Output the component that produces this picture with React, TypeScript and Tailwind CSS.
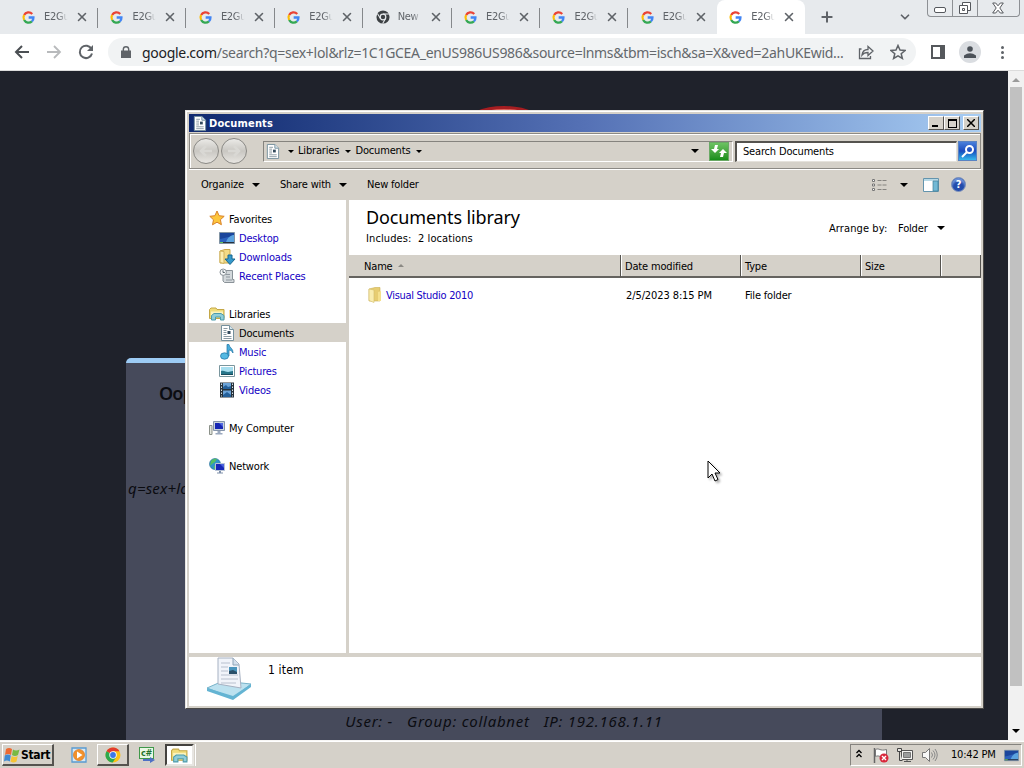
import React from 'react';
import { ChevronDown, Plus, X } from 'lucide-react';

const tabs = ['E2Gu', 'E2Gu', 'E2Gu', 'E2Gu', 'New', 'E2Gu', 'E2Gu', 'E2Gu', 'E2Gu'];

const navGroups = [
  { name: 'Favorites', icon: 'star', items: [
    { name: 'Desktop', icon: 'desktop' },
    { name: 'Downloads', icon: 'downloads' },
    { name: 'Recent Places', icon: 'recent' },
  ] },
  { name: 'Libraries', icon: 'libraries', items: [
    { name: 'Documents', icon: 'document' },
    { name: 'Music', icon: 'music' },
    { name: 'Pictures', icon: 'pictures' },
    { name: 'Videos', icon: 'videos' },
  ] },
  { name: 'My Computer', icon: 'computer', items: [] },
  { name: 'Network', icon: 'network', items: [] },
];

const shapes: Record<string, React.ReactNode> = {
  star: <path d="M8 0l2.100 4.700 5.100.6-3.800 3.400 1 5L8 11.200l-4.500 2.600 1-5L.8 5.300l5.100-.6z" fill="#fdc63c" stroke="#d9822b" />,
  desktop: (
    <>
      <path d="M.5 2.500h15v11H.5z" fill="#2c62bd" stroke="#8193a3" />
      <path d="M1 3h14v4C9 6 5 9 1 9z" fill="#1b469c" />
      <path d="M7 12c2-5 5-7 8-7v7z" fill="#5aa2df" />
      <path d="M1 12.500h14" stroke="#28323f" />
      <path d="M1 12.500h3" stroke="#68c45d" />
    </>
  ),
  downloads: (
    <>
      <path d="M1 2l5-1.500h5V14H1z" fill="#f3db85" stroke="#c9a84a" />
      <path d="M5 2.500v12l-4-1V2z" fill="#fbeeb1" stroke="#d0b25c" />
      <path d="M9 6h4v4h3l-5 5.500L6 10h3z" fill="#3599cc" stroke="#19678f" />
    </>
  ),
  recent: (
    <>
      <path d="M5 2.500h8.500v9H15v3H5.500L4 13V6z" fill="#d3d8db" stroke="#8a9298" />
      <path d="M7 6.500h4M7 9h4M7 12h6" stroke="#8f989f" />
      <circle cx="4.200" cy="4.200" r="3.200" fill="#f6f8f9" stroke="#8a9298" />
      <path d="M4 2.300v2.200h1.800" stroke="#59646c" fill="none" />
    </>
  ),
  libraries: (
    <>
      <path d="M.5 3.500L2 2h5l1 1.500h7v9H.5z" fill="#f0dc7a" stroke="#c4a746" />
      <path d="M2 5.500h12v4H2z" fill="#fbf3bd" />
      <path d="M2.500 14V9.500L5 7.500h7l3 2V14h-3.500v-3h-5v3z" fill="#8fcdd8" stroke="#4d9bab" />
    </>
  ),
  document: (
    <>
      <path d="M2.500.500h8l4 4v11h-12z" fill="#fff" stroke="#75909d" />
      <path d="M10.500.500v4h4" fill="#d7e6ed" stroke="#75909d" />
      <path d="M4.500 3.500h4M4.500 5.500h3M4.500 7.500h3M4.500 9.500h3M4.500 11.500h8M4.500 13.500h8" stroke="#8b9aa3" />
      <path d="M8.500 6h3v3h-3z" fill="#334a5c" />
    </>
  ),
  music: (
    <>
      <path d="M8 .5h2c0 3 4.500 4 4 8.500-1-2-2.500-3-4-3V12H8z" fill="#49addb" stroke="#1e73a4" strokeWidth=".7" />
      <ellipse cx="5.500" cy="12" rx="4" ry="3.200" fill="#55b9e2" stroke="#1e73a4" strokeWidth=".7" />
    </>
  ),
  pictures: (
    <>
      <path d="M.5 2.500h15v11H.5z" fill="#fff" stroke="#7a969e" />
      <path d="M2 4h12v8H2z" fill="#a7deef" />
      <path d="M2 8c3-1 5 1 7 1s3-1 5-1v4H2z" fill="#27758a" />
      <path d="M2 11h12v1H2z" fill="#174b5c" />
    </>
  ),
  videos: (
    <>
      <path d="M1 .5h14v15H1z" fill="#26313a" />
      <path d="M4 1h8v6H4zM4 8.500h8V15H4z" fill="#6ba3d8" />
      <path d="M4 5l3-2 2 2 3-1v3H4zM4 13l4-3 4 3v2H4z" fill="#24609a" />
      <path d="M2.500 1.500v13M13.500 1.500v13" stroke="#d5e0e7" strokeDasharray="1.500 1.500" />
    </>
  ),
  computer: (
    <>
      <path d="M.5 5.500h2.500v9H.5z" fill="#e3e6dd" stroke="#8b9189" />
      <path d="M4.500 1.500h11v9h-11z" fill="#cad3dd" stroke="#8695ab" />
      <path d="M6 3h8v6H6z" fill="#1727b4" />
      <path d="M10 3h4v4z" fill="#5369e0" />
      <path d="M8.500 11h3v2h2v1.500h-7V13h2z" fill="#9aa8be" />
    </>
  ),
  network: (
    <>
      <circle cx="6" cy="6" r="5.500" fill="#3094c8" stroke="#226b93" strokeWidth=".6" />
      <path d="M2 3c3-3 5-2 6-2L6 4 3 6 1 8zM5 8l3-1v4H5z" fill="#54bf62" />
      <path d="M6.500 5.500h9v7h-9z" fill="#1828b8" stroke="#b7c3d5" />
      <path d="M11 6h4v4z" fill="#4b62dd" />
      <path d="M10 13h2v1.500h2v1H8v-1h2z" fill="#7f90aa" />
    </>
  ),
  folder: (
    <>
      <path d="M2 2l6-1.500h5V14H2z" fill="#e7cd72" stroke="#cbb052" strokeWidth=".6" />
      <path d="M2 2l5 1v12.500l-5-2z" fill="#f9edb0" stroke="#d3bd6a" strokeWidth=".6" />
      <path d="M11 5l3-1v10h-3z" fill="#f5e08c" />
    </>
  ),
  google: (
    <g fill="none" strokeWidth="2.800">
      <path d="M12.600 3.600A6.200 6.200 0 0 0 2.600 5" stroke="#ea4335" />
      <path d="M2.600 5a6.200 6.200 0 0 0 0 6" stroke="#fbbc05" />
      <path d="M2.600 11a6.200 6.200 0 0 0 9.600 1.700" stroke="#34a853" />
      <path d="M12.200 12.700A6 6 0 0 0 14.100 8H8.200" stroke="#4285f4" />
    </g>
  ),
  chrome: (
    <>
      <circle cx="8" cy="8" r="7.500" fill="#fbc116" />
      <path d="M8 8L1.500 4.200A7.500 7.500 0 0 1 14.500 4.200H8z" fill="#e33b2e" />
      <path d="M8 8L1.500 4.200A7.500 7.500 0 0 0 7.700 15.500L11.300 9.900z" fill="#2da94f" />
      <circle cx="8" cy="8" r="3.700" fill="#fff" />
      <circle cx="8" cy="8" r="2.900" fill="#3b78e7" />
    </>
  ),
  chromeGray: (
    <>
      <circle cx="8" cy="8" r="7.500" fill="#3c4043" />
      <circle cx="8" cy="8" r="3.200" fill="#3c4043" stroke="#e7eaed" strokeWidth="1.400" />
      <path d="M8 4.500h6.800M5 9.700L1.600 4M11 9.700L7.600 15.500" stroke="#e7eaed" strokeWidth="1.200" />
    </>
  ),
  flag: (
    <>
      <path d="M1.500 1v15" stroke="#666" strokeWidth="1.500" />
      <path d="M2.500 2.500c4-2 4 2 11 0v7c-6 2-7-2-11 0z" fill="#fff" stroke="#777" />
      <circle cx="11" cy="11" r="4.500" fill="#d9283c" />
      <path d="M9 9l4 4m0-4l-4 4" stroke="#fff" strokeWidth="1.400" />
    </>
  ),
  lan: (
    <>
      <path d="M4.500 3.500h11v9h-11z" fill="#f5f5f3" stroke="#555" />
      <path d="M6.500 5.500h7v5h-7z" fill="#9b9d9d" stroke="#777" />
      <path d="M7 14.500h7M10 12.500v2" stroke="#555" />
      <path d="M.5 1.500h4v3h-4zM2.500 4.500v9h3" fill="#e5e4e0" stroke="#444" />
    </>
  ),
  speaker: (
    <>
      <path d="M1.500 5.500h3l4-4v13l-4-4h-3z" fill="#f8f8f8" stroke="#777" />
      <path d="M10.500 5.500q2 2.500 0 5M12 3.500q4 4.500 0 9M14 2q4.500 6 0 12" stroke="#888" fill="none" />
    </>
  ),
  windows: (
    <>
      <path d="M2 2q3-2 6 0L7 8Q4 6 1 8z" fill="#ed6a32" />
      <path d="M9 2.500q3 2 6.500 0L14 8q-3 2-6 0z" fill="#79b943" />
      <path d="M.8 8.500q3-2 6 0l-1 6q-3-2-5.800 0z" fill="#3f8ad2" />
      <path d="M7.700 9q3 2 6 0l-1.200 5.500q-3 2-6 0z" fill="#f6c434" />
    </>
  ),
  player: (
    <>
      <path d="M1 1h14v14H1z" fill="#d5e9f7" stroke="#5a9ad0" strokeWidth="1.300" />
      <circle cx="8" cy="8" r="5.600" fill="#f1912b" stroke="#d8701a" strokeWidth=".6" />
      <path d="M6 4.500L11.500 8 6 11.500z" fill="#fff" />
    </>
  ),
};

const Icon = ({ name, className = 'w-4 h-4' }: { name: string; className?: string }) => (
  <svg viewBox="0 0 16 16" className={`shrink-0 overflow-visible ${className}`} fill="none">{shapes[name]}</svg>
);

const Caret = ({ className = 'w-[7px] h-1' }: { className?: string }) => (
  <svg viewBox="0 0 8 4" className={`shrink-0 ${className}`}><path d="M0 0h8L4 4z" fill="#000" /></svg>
);

const raised = 'bg-[#d5d1c9] border border-t-white border-l-white border-r-[#55534f] border-b-[#55534f]';

function TabStrip() {
  return (
    <div className="flex h-[34px] bg-[#e7eaed] pl-[9.600px] text-[#5f6368]">
      {tabs.map((tab, i) => (
        <div key={i} className={`relative flex items-center w-[88.400px] shrink-0 pl-[12.500px] ${i === 8 ? 'bg-white rounded-t-lg' : ''}`}>
          <Icon name={tab === 'New' ? 'chromeGray' : 'google'} className={tab === 'New' ? 'w-[14px] h-[14px]' : 'w-[13px] h-[13px]'} />
          <span className={`${tab === 'New' ? 'ml-[2px]' : 'ml-[3px]'} block pt-px pl-[6px] w-[31px] whitespace-nowrap text-[11px] tracking-[-0.300px] [mask-image:linear-gradient(to_right,black_65%,transparent_96%)]`}>{tab}</span>
          <X className="w-3.5 h-3.5 ml-[6px] shrink-0" strokeWidth={2.700} />
          {i < 7 && <span className="absolute right-0 top-2 w-px h-5 bg-[#85888b]" />}
        </div>
      ))}
      <Plus className="w-4 h-4 mt-[9px] ml-[13.400px]" strokeWidth={3} />
      <ChevronDown className="w-3.5 h-3.5 mt-[10px] ml-[63px]" strokeWidth={3} />
      <div className="flex ml-[15px] w-[93px] h-[17px] border border-t-0 border-[#8d9094] rounded-b-[4px]">
        <div className="w-[25px] border-r border-[#8d9094] flex justify-center pt-[7px]">
          <div className="w-3 h-[6px] rounded-xs border border-[#55585d] bg-white" />
        </div>
        <div className="w-[25px] border-r border-[#8d9094] flex justify-center pt-[1px]">
          <svg viewBox="0 0 14 14" className="w-[14px] h-[14px]" fill="#fff" stroke="#55585d"><path d="M4.500 1.500h8v8h-8z" /><path d="M1.500 4.500h8v8h-8z" /><path d="M4.500 7.500h2v2h-2z" /></svg>
        </div>
        <div className="flex-1 flex justify-center pt-[2px]">
          <svg viewBox="0 0 12 12" className="w-3 h-3" fill="#fff" stroke="#55585d"><path d="M.7 1h3L6 3.800 8.300 1h3L7.800 6l3.500 5h-3L6 8.200 3.700 11h-3L4.200 6z" /></svg>
        </div>
      </div>
    </div>
  );
}

function AddressBar() {
  return (
    <div className="flex items-center h-[37px] bg-white border-b border-[#dcdcdc] text-[#5f6368] pl-[14px]">
      <svg viewBox="0 0 16 16" className="w-4 h-4" fill="none" stroke="#4b4f53" strokeWidth="2"><path d="M15 8H2m6-6L2 8l6 6" /></svg>
      <svg viewBox="0 0 16 16" className="w-4 h-4 ml-4" fill="none" stroke="#b8babc" strokeWidth="1.800"><path d="M1 8h13M8 2l6 6-6 6" /></svg>
      <svg viewBox="0 0 16 16" className="w-4 h-4 ml-4" fill="none" stroke="#5f6368" strokeWidth="2"><path d="M13.500 5A6.200 6.200 0 1 0 14 9.500" /><path d="M15 1v6H9z" fill="#5f6368" stroke="none" /></svg>
      <div className="flex items-center ml-[14px] w-[808px] h-7 rounded-full bg-[#f1f3f4] pl-[13px]">
        <svg viewBox="0 0 10 13" className="w-[10px] h-[13px]"><path d="M0 4.500h10V12H0z" fill="#5f6368" /><path d="M2.300 5V3.500a2.700 2.700 0 0 1 5.400 0V5" fill="none" stroke="#5f6368" strokeWidth="1.400" /></svg>
        <span className="ml-[11px] w-[704px] whitespace-nowrap text-[14px] tracking-[-0.295px] font-['Noto_Sans',sans-serif] text-[#64686c]"><span className="text-[#202124]">google.com</span>/search?q=sex+lol&amp;rlz=1C1GCEA_enUS986US986&amp;source=lnms&amp;tbm=isch&amp;sa=X&amp;ved=2ahUKEwid...</span>
        <svg viewBox="0 0 16 16" className="w-4 h-4 ml-[12px]" fill="none" stroke="#5f6368" strokeWidth="1.300"><path d="M3.500 5H1.500v9.500h11V12" /><path d="M4 11c.5-4 3-5.500 6-5.500V2.500L15 7l-5 4.500v-3c-2.500 0-4.500.5-6 2.500z" /></svg>
        <svg viewBox="0 0 16 16" className="w-4 h-4 ml-4" fill="none" stroke="#5f6368" strokeWidth="1.500"><path d="M8 1.500l2 4.600 5 .4-3.800 3.200 1.200 4.800L8 11.900l-4.400 2.600 1.200-4.800L1 6.500l5-.4z" /></svg>
      </div>
      <svg viewBox="0 0 14 14" className="w-[14px] h-[14px] ml-[15px]"><path d="M1 1h12v12H1z" fill="none" stroke="#55585c" strokeWidth="2" /><path d="M9 1h4v12H9z" fill="#55585c" /></svg>
      <div className="flex justify-center items-center w-[22px] h-[22px] rounded-full bg-[#dadde1] ml-[14px]">
        <svg viewBox="0 0 12 12" className="w-3 h-3" fill="#4c5259"><circle cx="6" cy="3" r="2.800" /><path d="M0 12V9.500Q6 5 12 9.500V12z" /></svg>
      </div>
      <div className="flex flex-col gap-[2px] ml-5">
        {[0, 1, 2].map((i) => <span key={i} className="w-[3px] h-[3px] rounded-full bg-[#5f6368]" />)}
      </div>
    </div>
  );
}

function BlockedPage() {
  return (
    <div className="flex h-[669px] bg-[#1f222b]">
      <div className="flex-1 overflow-hidden pt-[35px]">
        <div className="mx-auto w-[150px] h-[150px] rounded-full border-[3px] border-[#a51d21] bg-[#e06a60]" />
        <div className="mx-auto mt-[102px] w-[756px] h-[382px] rounded-t-[5px] border-t-[5px] border-[#9dccf5] bg-[#464a5b] font-['Noto_Sans',sans-serif] text-[#0b0c11]">
          <h1 className="pl-[33px] pt-[17px] text-[18px] leading-[26px] font-semibold tracking-[-0.800px]">Oops!</h1>
          <p className="pl-[2px] pt-[70px] text-[15px] leading-[24px] italic tracking-[0.200px]">q=sex+lol</p>
          <p className="pt-[209px] text-center text-[15px] leading-[24px] italic tracking-[0.750px] whitespace-pre">User: -   Group: collabnet   IP: 192.168.1.11</p>
        </div>
      </div>
      <div className="flex flex-col items-center justify-between w-4 bg-[#f1f1f1] py-[7px]">
        <svg viewBox="0 0 8 4" className="w-2 h-1"><path d="M0 4h8L4 0z" fill="#9b9b9b" /></svg>
        <div className="w-3 h-[599px] bg-[#c1c1c1] mb-auto mt-[5px]" />
        <Caret className="w-2 h-1" />
      </div>
    </div>
  );
}

function TitleBar() {
  return (
    <div className="flex items-center h-[18px] bg-linear-to-r from-[#10296f] via-[#5571b5] to-[#a8cdf3] pl-[3px] pr-[2px] text-white">
      <Icon name="document" className="w-[15px] h-[15px]" />
      <span className="ml-[2px] pt-px text-[11px] font-bold leading-[18px] tracking-[0.160px]">Documents</span>
      <div className="flex ml-auto">
        <div className={`${raised} w-4 h-[14px] flex items-end pl-[3px] pb-[2px]`}><span className="w-[6px] h-[2px] bg-black" /></div>
        <div className={`${raised} w-4 h-[14px] flex items-center justify-center`}><span className="w-[9px] h-[9px] border border-t-2 border-black" /></div>
        <div className={`${raised} w-4 h-[14px] flex items-center justify-center ml-[3px]`}><svg viewBox="0 0 8 8" className="w-2 h-2" stroke="#000" strokeWidth="1.500"><path d="M0 0l8 8M8 0L0 8" /></svg></div>
      </div>
    </div>
  );
}

function NavButton({ flip }: { flip?: boolean }) {
  return (
    <div className="flex items-center justify-center w-[26px] h-[26px] rounded-full border-[1.500px] border-[#8a8985] bg-linear-to-b from-[#ebeae7] via-[#c9c7c2] to-[#e8e6e2]">
      <svg viewBox="0 0 16 16" className={`w-4 h-4 ${flip ? 'rotate-180' : ''}`} fill="none" stroke="#d9d8d4" strokeWidth="2.500"><path d="M14 8H3m5-5L3 8l5 5" /></svg>
    </div>
  );
}

function ExplorerToolbar() {
  return (
    <div className="flex items-center h-[36px] mt-px border border-[#8b8984] pl-[3px] shadow-[inset_1px_1px_0_#fff,0_1px_0_#fff]">
      <NavButton />
      <div className="ml-[2px]"><NavButton flip /></div>
      <div className="flex items-center ml-[16px] w-[470px] h-[21px] shrink-0 border border-[#85837e] border-b-white border-r-white pl-[1px]">
        <Icon name="document" className="w-[15px] h-[15px]" />
        <Caret className="w-[6px] h-[3px] ml-[8px]" />
        <span className="w-[41px] ml-[4px] whitespace-nowrap">Libraries</span>
        <Caret className="w-[6px] h-[3px] ml-[6px]" />
        <span className="w-[54px] ml-[4.500px] whitespace-nowrap">Documents</span>
        <Caret className="w-[6px] h-[3px] ml-[6px]" />
        <Caret className="w-[8px] h-1 ml-auto mr-[33px]" />
      </div>
      <div className="-ml-[24px] flex items-center justify-center w-[20px] h-[19px] shrink-0 bg-linear-to-b from-[#6cc262] to-[#148e18] border border-[#69a965]">
        <svg viewBox="0 0 16 12" className="w-4 h-3 shrink-0" fill="#fff"><path d="M4 0h3L6 4h2L4 8 0 4h3zM12 12H9l1-4H8l4-4 4 4h-3z" /></svg>
      </div>
      <div className="flex items-center ml-[6px] w-[222px] h-[21px] shrink-0 bg-white border-2 border-[#55534f] border-b-[#e5e2dc] border-r-[#e5e2dc] border-b border-r pl-[6px] pt-px">Search Documents</div>
      <div className="flex items-center justify-center ml-[1px] w-[19px] h-[20px] shrink-0 bg-linear-to-b from-[#4a7fda] via-[#1c4bbe] to-[#38b8ea] border border-[#5a83c2]">
        <svg viewBox="0 0 14 14" className="w-[14px] h-[14px]" fill="none" stroke="#fff" strokeWidth="2"><circle cx="8.500" cy="5.500" r="3.500" /><path d="M6 8l-5 5" /></svg>
      </div>
    </div>
  );
}

function CommandBar() {
  return (
    <div className="flex items-center h-[31px] pl-3">
      <span className="w-[44px] pt-[2px] whitespace-nowrap">Organize</span>
      <Caret className="w-2 h-1 ml-[7px]" />
      <span className="w-[52px] pt-[2px] ml-[20px] whitespace-nowrap">Share with</span>
      <Caret className="w-2 h-1 ml-[7px]" />
      <span className="ml-[20px] pt-[2px]">New folder</span>
      <svg viewBox="0 0 15 12" className="w-[15px] h-3 ml-auto" fill="none" stroke="#85837f"><path d="M5.500 1.500H15M5.500 6H15M5.500 10.500H15" strokeDasharray="4 1" /><path d="M.5.500h2v2h-2zM.5 5h2v2h-2zM.5 9.500h2v2h-2z" stroke="#777" fill="#fff" /></svg>
      <Caret className="w-2 h-1 ml-[13px]" />
      <svg viewBox="0 0 16 14" className="w-4 h-[14px] ml-[15px]"><path d="M.5.500h15v13H.5z" fill="#fff" stroke="#6394ad" /><path d="M1 1h14v2H1z" fill="#b7d9e6" /><path d="M10 3h5v10h-5z" fill="#72b9d5" stroke="#407f99" strokeWidth=".7" /></svg>
      <div className="flex items-center justify-center w-[15px] h-[15px] rounded-full bg-[#234cac] border border-[#8095bd] shadow-[inset_0_3px_2px_#6b90d7] ml-[12px] mr-[15px] text-white text-[11px] font-bold leading-none">?</div>
    </div>
  );
}

function NavPane() {
  return (
    <div className="w-[157px] bg-white pt-[9px] shrink-0">
      {navGroups.map((group) => (
        <div key={group.name} className="mb-[19px]">
          <div className="flex items-center h-[19px] pl-5">
            <Icon name={group.icon} />
            <span className="ml-[4px] pt-[3px]">{group.name}</span>
          </div>
          {group.items.map((item) => (
            <div key={item.name} className={`flex items-center h-[19px] pl-[30px] ${item.name === 'Documents' ? 'bg-[#d5d1c9]' : 'text-[#1400c4]'}`}>
              <Icon name={item.icon} />
              <span className="ml-[4px] pt-[3px]">{item.name}</span>
            </div>
          ))}
        </div>
      ))}
    </div>
  );
}

function FileList() {
  const cell = 'flex items-center h-[23px] pl-[4px] pt-[4px] border-r border-[#55534f] border-b-2 border-b-[#65635f] shadow-[inset_1px_0_0_#fff]';
  return (
    <div className="flex-1 bg-white">
      <div className="flex justify-between h-[55px] pl-[17px] pr-[36px]">
        <div>
          <h2 className="pt-[5px] text-[18px] leading-[25px] font-['Noto_Sans',sans-serif] tracking-[-0.120px] whitespace-nowrap">Documents library</h2>
          <p className="pt-px leading-[16px] whitespace-pre tracking-[0.100px]">Includes:  2 locations</p>
        </div>
        <div className="flex items-center h-4 mt-5">
          <span className="w-[58px] pt-[2px] whitespace-nowrap tracking-[0.100px]">Arrange by:</span>
          <span className="ml-[11px] w-[31px] pt-[2px]">Folder</span>
          <Caret className="w-2 h-1 ml-[8px]" />
        </div>
      </div>
      <div className="flex bg-[#d5d1c9]">
        <div className="flex items-center w-[272px] h-[23px] pl-[15px] pt-[4px] border-r border-[#55534f] border-b-2 border-b-[#65635f]">
          Name
          <svg viewBox="0 0 6 3" className="w-[6px] h-[3px] ml-[5px] mb-[4px]"><path d="M0 3h6L3 0z" fill="#8b8984" /></svg>
        </div>
        <div className={`${cell} w-[120px]`}>Date modified</div>
        <div className={`${cell} w-[120px]`}>Type</div>
        <div className={`${cell} w-[80px]`}>Size</div>
        <div className={`${cell} flex-1`} />
      </div>
      <div className="flex items-center h-[19px] mt-[7px] pl-[18px]">
        <Icon name="folder" />
        <span className="ml-[3px] w-[240px] pt-[3px] tracking-[-0.300px] text-[#1400c4]">Visual Studio 2010</span>
        <span className="w-[119px] pt-[3px] tracking-[-0.100px]">2/5/2023 8:15 PM</span>
        <span className="pt-[3px]">File folder</span>
      </div>
    </div>
  );
}

function DetailsPane() {
  return (
    <div className="flex h-[49px] mt-[4px] bg-white pl-[17px]">
      <svg viewBox="0 0 46 44" className="w-[46px] h-11">
        <path d="M1 31l16-7 28 3-18 14z" fill="#bce1ef" stroke="#77b3ca" />
        <path d="M1 31l26 8 18-12v3L27 43 1 34z" fill="#64b4d3" />
        <path d="M12 1h15l6 6 2 24-23-4z" fill="#f1f4fa" stroke="#a6b1c2" />
        <path d="M27 1v7h6" fill="#d3dfec" stroke="#8ea5b8" />
        <path d="M15 6h9M15 10h7M15 14h7M15 18h17M15 22h17M15 26h15" stroke="#b8c0ce" />
        <path d="M23 10h8v7h-8z" fill="#4a94bc" /><path d="M23 14l4-1 4 2v2h-8z" fill="#29506a" />
      </svg>
      <span className="ml-[16px] mt-[5px] text-[12px] leading-[16px] tracking-[0.150px]">1 item</span>
    </div>
  );
}

function Explorer() {
  return (
    <div className="absolute left-[185px] top-[110px] w-[799px] h-[599px] bg-[#d5d1c9] border border-t-[#e8e6e1] border-l-[#e8e6e1] border-r-[#4b4a48] border-b-[#4b4a48] shadow-[inset_1px_1px_0_#fff] pt-[3px] pl-[3px] pr-[2px] text-[11px] tracking-[-0.170px] text-black">
      <TitleBar />
      <ExplorerToolbar />
      <CommandBar />
      <div className="flex h-[453px] gap-[3px]">
        <NavPane />
        <FileList />
      </div>
      <DetailsPane />
      <svg viewBox="0 0 14 22" className="absolute left-[521px] top-[349px] w-[14px] h-[22px] drop-shadow-[2px_2px_1px_rgba(0,0,0,0.300)]"><path d="M1 1v17l4-4 3 7 3-1.500L8 13h5z" fill="#fff" stroke="#000" /></svg>
    </div>
  );
}

function Taskbar() {
  return (
    <div className="flex items-center h-7 bg-[#d5d1c9] border-t border-[#f7f6f4] shadow-[inset_0_1px_0_#fff] pt-px pl-[2px] pr-[2px] text-[11px] tracking-[-0.200px]">
      <div className={`${raised} border-r-2 border-b-2 flex items-center w-[52px] h-[22px] pl-[1px]`}>
        <Icon name="windows" className="w-[16px] h-[16px]" />
        <span className="ml-[1px] text-[12px] font-bold tracking-[-0.300px]">Start</span>
      </div>
      <Icon name="player" className="w-[16px] h-[16px] ml-[17px]" />
      <div className={`${raised} border-r-2 border-b-2 flex items-center justify-center w-8 h-[22px] ml-[10px]`}><Icon name="chrome" /></div>
      <div className="relative w-4 h-4 ml-[10px] shrink-0">
        <div className="w-[15px] h-[12px] border border-[#40984a] bg-[#e9f8e5] text-[#25742c] text-[9px] leading-[10px] font-bold text-center">c#</div>
        <svg viewBox="0 0 12 6" className="absolute left-[4px] top-[10px] w-3 h-[6px]"><path d="M0 2h7V0l5 3-5 3V4H0z" fill="#4e70c5" /></svg>
      </div>
      <div className="flex items-center justify-center w-[29px] h-[22px] ml-[10px] bg-white border-2 border-t-[#44423f] border-l-[#44423f] border-r-[#e7e5e1] border-b-[#e7e5e1]"><Icon name="libraries" className="w-[17px] h-[17px]" /></div>
      <span className="w-px h-[22px] bg-white ml-[1px]" />
      <div className="flex items-center ml-auto w-[172px] h-[22px] border border-t-[#85837e] border-l-[#85837e] border-r-white border-b-white pl-[5px]">
        <svg viewBox="0 0 6 9" className="w-[6px] h-[9px] mb-1" fill="none" stroke="#000" strokeWidth="1.300"><path d="M.5 4L3 1.500 5.500 4M.5 8L3 5.500 5.500 8" /></svg>
        <Icon name="flag" className="w-4 h-4 ml-[11px]" />
        <Icon name="lan" className="w-4 h-4 ml-2" />
        <Icon name="speaker" className="w-4 h-4 ml-2" />
        <span className="ml-[14px] w-[46px] pt-px whitespace-nowrap">10:42 PM</span>
        <Icon name="desktop" className="w-[15px] h-[15px] ml-[7px]" />
      </div>
    </div>
  );
}

export default function App() {
  return (
    <div className="relative w-[1024px] h-[768px] overflow-hidden font-['DejaVu_Sans_Condensed','DejaVu_Sans',sans-serif]">
      <TabStrip />
      <AddressBar />
      <BlockedPage />
      <Taskbar />
      <Explorer />
    </div>
  );
}
